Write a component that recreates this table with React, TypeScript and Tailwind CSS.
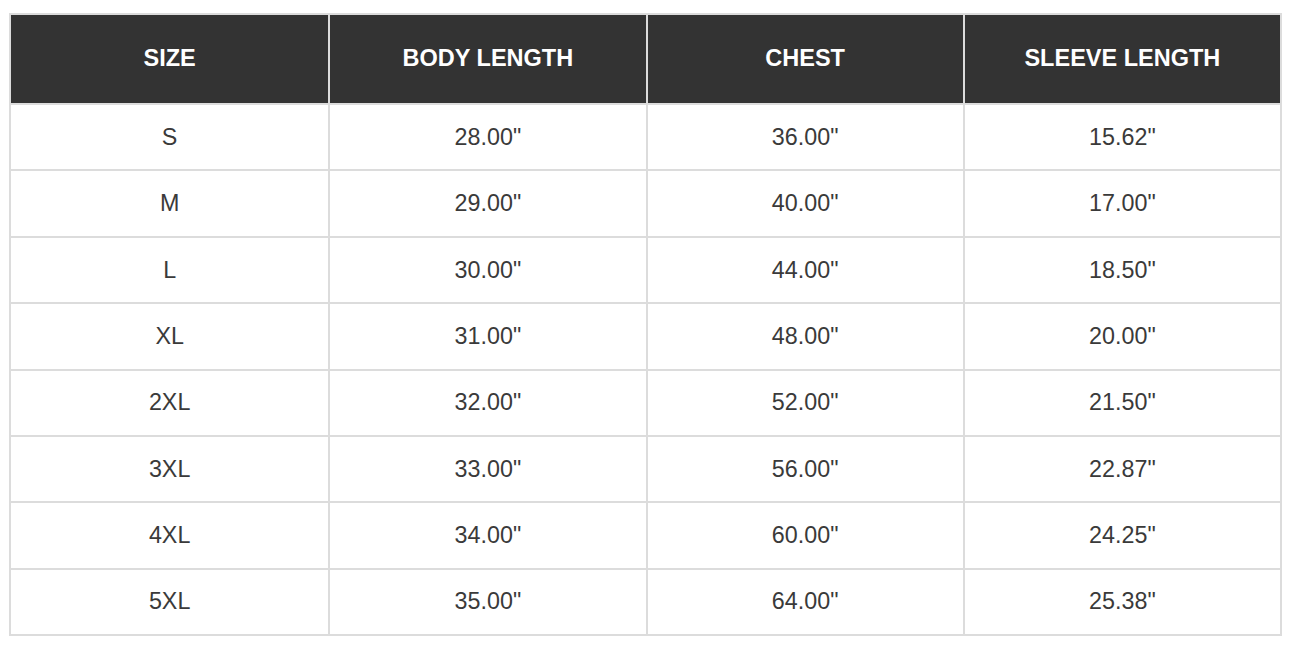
import React from "react";

const rows = [
  ["S", '28.00"', '36.00"', '15.62"'],
  ["M", '29.00"', '40.00"', '17.00"'],
  ["L", '30.00"', '44.00"', '18.50"'],
  ["XL", '31.00"', '48.00"', '20.00"'],
  ["2XL", '32.00"', '52.00"', '21.50"'],
  ["3XL", '33.00"', '56.00"', '22.87"'],
  ["4XL", '34.00"', '60.00"', '24.25"'],
  ["5XL", '35.00"', '64.00"', '25.38"'],
];

const headers = ["SIZE", "BODY LENGTH", "CHEST", "SLEEVE LENGTH"];

export default function App() {
  return (
    <div
      className="min-h-[651px] bg-white pt-[13px] pl-[9px]"
      style={{ fontFamily: '"Liberation Sans", Arial, sans-serif' }}
    >
      <div className="w-[1273px] border-2 border-[#dcdcdc]">
        <div className="grid grid-cols-4 bg-[#333333]">
          {headers.map((h, i) => (
            <div
              key={h}
              className={`flex h-[88px] items-center justify-center text-[23.5px] font-bold text-white ${
                i > 0 ? "border-l-2 border-[#dcdcdc]" : ""
              }`}
            >
              {h}
            </div>
          ))}
        </div>
        {rows.map((r) => (
          <div key={r[0]} className="grid grid-cols-4 border-t-2 border-[#dcdcdc]">
            {r.map((c, i) => (
              <div
                key={i}
                className={`flex h-[64.4px] items-center justify-center text-[23.3px] text-[#3a3a3a] ${
                  i > 0 ? "border-l-2 border-[#dcdcdc]" : ""
                }`}
              >
                {c}
              </div>
            ))}
          </div>
        ))}
      </div>
    </div>
  );
}
